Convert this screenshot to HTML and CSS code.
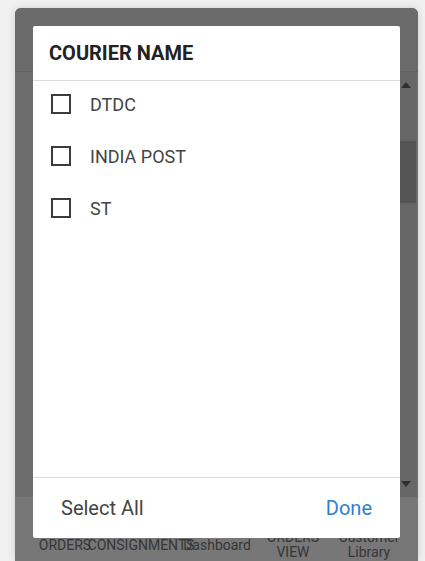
FILE: index.html
```html
<!DOCTYPE html>
<html lang="en">
<head>
    <meta charset="UTF-8">
    <meta name="viewport" content="width=device-width, initial-scale=1.0">
    <title>Courier Filter</title>
    <link rel="stylesheet" href="styles.css">
</head>
<body>
    <div class="screen">
        <header class="app-header"></header>
        <main class="app-body">
            <div class="scrollbar">
                <span class="arrow up"></span>
                <span class="thumb"></span>
                <span class="arrow down"></span>
            </div>
        </main>
        <nav class="tabs">
            <span class="tab">ORDERS</span>
            <span class="tab">CONSIGNMENTS</span>
            <span class="tab">Dashboard</span>
            <span class="tab">ORDERS<br>VIEW</span>
            <span class="tab">Customer<br>Library</span>
        </nav>

        <!-- modal over the dimmed app -->
        <section class="dialog">
            <h2 class="dialog-title">COURIER NAME</h2>
            <ul class="options">
                <li class="option"><span class="box"></span>DTDC</li>
                <li class="option"><span class="box"></span>INDIA POST</li>
                <li class="option"><span class="box"></span>ST</li>
            </ul>
            <footer class="dialog-footer">
                <button class="link">Select All</button>
                <button class="link primary">Done</button>
            </footer>
        </section>
    </div>
</body>
</html>
```

FILE: styles.css
```css
html, body {
    height: 100%;
}
body {
    margin: 0;
    background-color: #f1f1f1;
    font-family: Roboto, "Liberation Sans", sans-serif;
    overflow: hidden;
}
.screen {
    position: relative;
    margin: 8px 7px 0 15px;
    height: calc(100% - 8px);
    border-radius: 6px 6px 0 0;
    background-color: #6d6d6d;
    box-shadow: 0 0 8px rgba(0, 0, 0, 0.15);
    display: flex;
    flex-direction: column;
    overflow: hidden;
}
.app-header {
    height: 63px;
    flex-shrink: 0;
    border-bottom: 1px solid #626262;
    background-color: #6b6b6b;
}
.app-body {
    flex: 1;
    display: flex;
    justify-content: flex-end;
}
.scrollbar {
    width: 16px;
    margin-right: 2px;
    display: flex;
    flex-direction: column;
    align-items: flex-start;
    padding: 10px 0 10px;
    background-color: #676767;
}
.arrow {
    width: 0;
    height: 0;
    margin-left: 1px;
    border-left: 5px solid transparent;
    border-right: 5px solid transparent;
}
.arrow.up {
    border-bottom: 6px solid #2e2e2e;
}
.arrow.down {
    border-top: 6px solid #2e2e2e;
    margin-top: auto;
}
.thumb {
    align-self: stretch;
    height: 62px;
    margin-top: 53px;
    background-color: #545454;
}
.tabs {
    height: 64px;
    flex-shrink: 0;
    background-color: #777;
    display: flex;
    align-items: center;
    padding: 32px 0 0 12px;
    box-sizing: border-box;
    font-size: 14px;
    color: #363636;
}
.tab {
    width: 76px;
    line-height: 15px;
    text-align: center;
    white-space: nowrap;
    display: flex;
    flex-direction: column;
    align-items: center;
}
.dialog {
    position: absolute;
    top: 18px;
    left: 18px;
    right: 18px;
    height: 512px;
    background-color: #fff;
    border-radius: 2px;
    display: flex;
    flex-direction: column;
}
.dialog-title {
    margin: 0;
    height: 54px;
    flex-shrink: 0;
    padding-left: 16px;
    display: flex;
    align-items: center;
    font-size: 20px;
    font-weight: 700;
    color: #222;
    border-bottom: 1px solid #dcdcdc;
}
.options {
    list-style: none;
    margin: 0;
    padding: 0;
    flex: 1;
    display: flex;
    flex-direction: column;
    gap: 6px;
}
.option {
    height: 46px;
    display: flex;
    align-items: center;
    padding-left: 18px;
    font-size: 18px;
    color: #444;
}
.box {
    width: 16px;
    height: 16px;
    border: 2px solid #3a3d40;
    margin-right: 19px;
}
.dialog-footer {
    height: 60px;
    flex-shrink: 0;
    border-top: 1px solid #dcdcdc;
    display: flex;
    align-items: center;
    justify-content: space-between;
    padding: 0 28px;
}
.link {
    border: none;
    background: none;
    padding: 0;
    font-family: inherit;
    font-size: 20px;
    color: #444;
    cursor: pointer;
}
.link.primary {
    color: #2d7fd2;
}
```
